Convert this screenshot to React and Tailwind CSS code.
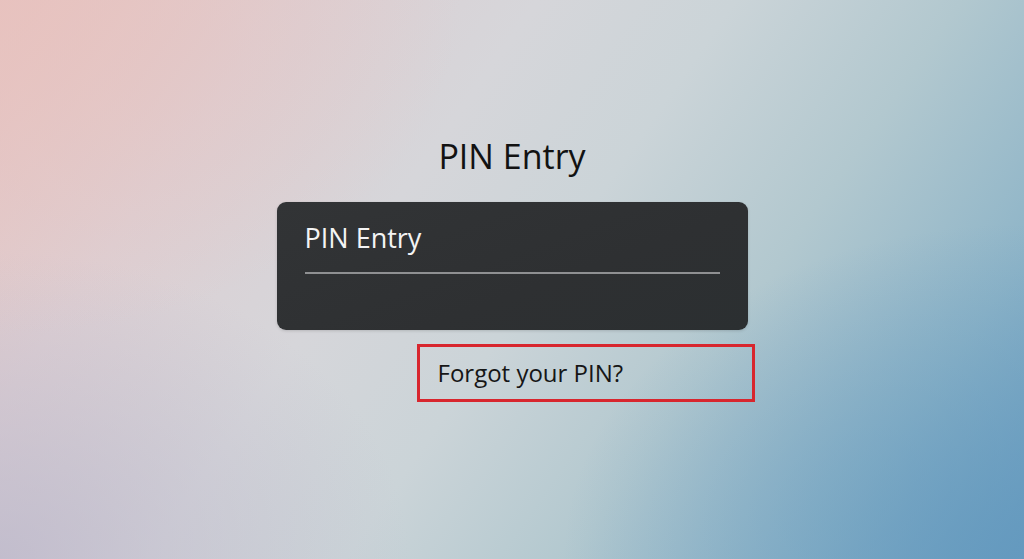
import React from 'react'

function PinCard() {
    return (
        <div className="w-[471px] h-[128px] rounded-[9px] bg-[linear-gradient(160deg,#323436_0%,#2e3032_60%,#2b2f31_100%)] px-[28px] pt-[20px] flex flex-col shadow-[0_1px_3px_rgba(0,0,0,0.15)]">
            <div className="text-[27px] leading-[32px] text-[#f4f4f4]">PIN Entry</div>
            <div className="mt-[18px] h-[2px] w-full bg-[#8f9092]"></div>
        </div>
    )
}

export default function App() {
    return (
        <main
            className="w-full h-[559px] overflow-hidden font-['Open_Sans','Noto_Sans',sans-serif] bg-[radial-gradient(ellipse_45%_60%_at_0%_0%,rgba(232,194,190,0.8)_0%,rgba(232,194,190,0)_100%),radial-gradient(ellipse_40%_55%_at_0%_100%,rgba(186,182,202,0.75)_0%,rgba(186,182,202,0)_100%),radial-gradient(ellipse_45%_60%_at_100%_100%,rgba(98,152,190,0.8)_0%,rgba(98,152,190,0)_100%),linear-gradient(125deg,#e6c4c2_0%,#ddcfd3_20%,#d6d6da_38%,#cbd4d8_52%,#b2c8cf_68%,#8fb5c8_85%,#6c9fc1_100%)]"
        >
            <div className="flex flex-col items-center pt-[136px]">
                <h1 className="text-[34px] leading-[40px] text-[#121212] font-normal">PIN Entry</h1>

                <div className="mt-[26px] flex flex-col">
                    <PinCard />

                    {/* highlighted link */}
                    <div className="mt-[14px] self-end -mr-[7px] w-[338px] h-[58px] border-[3px] border-[#d8262e] pl-[18px]">
                        <span className="text-[24px] leading-[52px] text-[#161616]">Forgot your PIN?</span>
                    </div>
                </div>
            </div>
        </main>
    )
}
